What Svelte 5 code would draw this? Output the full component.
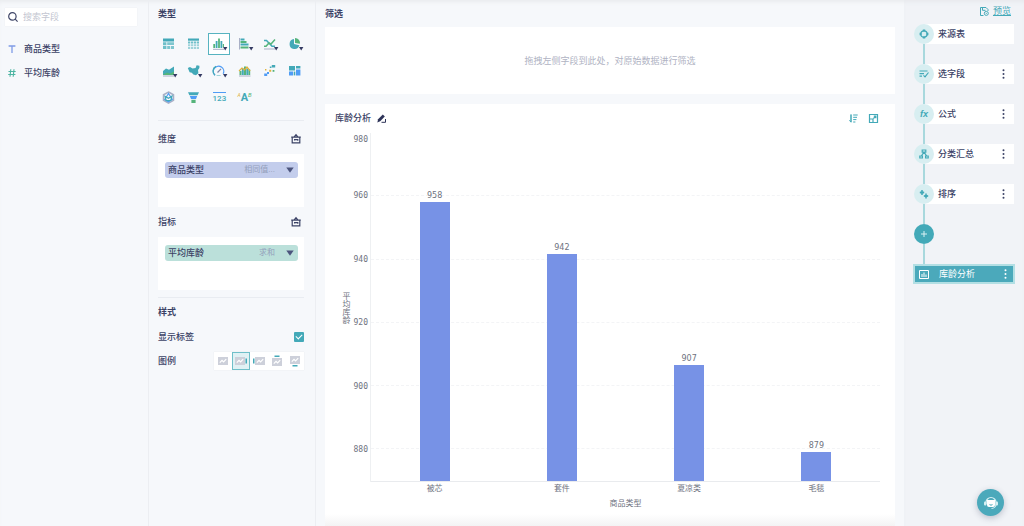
<script lang="ts">
	const teal = '#43a9b8';
	const green = '#55b47b';
	const blue = '#4f9cf5';
	const pale = '#9fd3da';
	const grey = '#a9b0c6';
	const gold = '#e0b23c';

	type Shape = { d: string; fill?: string; stroke?: string; width?: number };
	type ChartType = { name: string; menu?: boolean; shapes: Shape[] };

	const chartTypes: ChartType[] = [
		{
			name: '分组表',
			shapes: [
				{ d: 'M1 1.5h11v3H1z', fill: teal },
				{ d: 'M1 5.2h3.4v3H1zM1 9h3.4v3H1z', fill: '#6fbfc9' },
				{ d: 'M5.2 5.2H12v2.8H5.2zM5.2 9h3v3h-3zM9 9h3v3H9z', fill: '#7fc6cf' }
			]
		},
		{
			name: '明细表',
			shapes: [
				{ d: 'M1 1.5h11v2.2H1z', fill: teal },
				{ d: 'M1 4.4h2.2v2H1zM3.9 4.4h2.2v2H3.9zM6.8 4.4H9v2H6.8zM9.7 4.4H12v2H9.7z', fill: '#6fbfc9' },
				{ d: 'M1 7.2h2.2v2H1zM3.9 7.2h2.2v2H3.9zM6.8 7.2H9v2H6.8zM9.7 7.2H12v2H9.7zM1 10h2.2v2H1zM3.9 10h2.2v2H3.9zM6.8 10H9v2H6.8zM9.7 10H12v2H9.7z', fill: pale }
			]
		},
		{
			name: '柱形图',
			menu: true,
			shapes: [
				{ d: 'M1.3 7h1.8v4H1.3zM6.1 1.5h1.8V11H6.1z', fill: green },
				{ d: 'M3.7 4h1.8v7H3.7zM8.5 4h1.8v7H8.5z', fill: teal },
				{ d: 'M1 12.3h11', stroke: grey, width: 1 },
				{ d: 'M10.8 7H12v3h-1.2z', fill: green }
			]
		},
		{
			name: '条形图',
			menu: true,
			shapes: [
				{ d: 'M1.5 1v11.5', stroke: grey, width: 1 },
				{ d: 'M2.5 1.5h4v2h-4zM2.5 6.6h8v2h-8z', fill: teal },
				{ d: 'M2.5 4h6v2h-6zM2.5 9.4h8v2.2h-8z', fill: green }
			]
		},
		{
			name: '折线图',
			menu: true,
			shapes: [
				{ d: 'M1 3.5h2.5L9 9.3h3', stroke: teal, width: 1.5 },
				{ d: 'M1 9.3h2L6 6l2 1 4-4.5', stroke: green, width: 1.5 },
				{ d: 'M1 12h11', stroke: grey, width: 1 }
			]
		},
		{
			name: '饼图',
			menu: true,
			shapes: [
				{ d: 'M6 2a5 5 0 1 0 5.4 6.3L6 7z', fill: teal },
				{ d: 'M7 1a5 5 0 0 1 5 5.8L7 6z', fill: green }
			]
		},
		{
			name: '面积图',
			menu: true,
			shapes: [
				{ d: 'M1 7l3-2.5 3 1.2L12 2.5V11H1z', fill: teal },
				{ d: 'M1 10.5l4-2 3 1 4-2V11H1z', fill: green },
				{ d: 'M1 12h11', stroke: grey, width: 1 }
			]
		},
		{
			name: '地图',
			menu: true,
			shapes: [
				{ d: 'M0.8 4L3 3l2.5 1.6L8.6 4l1-2.8 2.8.6v2.3L11 6l.4 3.3-2.4 1.9-2.6-.8-1.6-1.6-2.2-.6z', fill: teal }
			]
		},
		{
			name: '仪表盘',
			menu: true,
			shapes: [
				{ d: 'M3 11.2A5.2 5.2 0 1 1 11.2 9.8', stroke: blue, width: 1.3 },
				{ d: 'M3 11.2A5.2 5.2 0 0 1 4 2.4', stroke: teal, width: 1.3 },
				{ d: 'M5.5 8.5L9 4.8', stroke: '#7d86a8', width: 1.2 },
				{ d: 'M4.6 11.5h4', stroke: pale, width: 1 }
			]
		},
		{
			name: '组合图',
			shapes: [
				{ d: 'M1.5 7h2v4h-2zM6 2.5h2V11H6zM10.4 5.5h1.8V11h-1.8z', fill: green },
				{ d: 'M3.8 4.5h2V11h-2zM8.3 4.5h2V11h-2z', fill: teal },
				{ d: 'M1 7l3-3 2.5 2L9 3l3.2 3.8', stroke: gold, width: 1.2 },
				{ d: 'M1 12h11.5', stroke: grey, width: 1 }
			]
		},
		{
			name: '散点图',
			shapes: [
				{ d: 'M6.8 2.4h1.6V4H6.8zM8.8 1h3.4v2.6H8.8z', fill: teal },
				{ d: 'M1.2 9.4h3V12h-3zM4 8h2v2H4z', fill: blue },
				{ d: 'M6.2 5.8h2v2h-2zM2 5h1.4v1.4H2z', fill: gold },
				{ d: 'M9.6 6h1.8v1.8H9.6z', fill: green }
			]
		},
		{
			name: '矩形树图',
			shapes: [
				{ d: 'M1 2h6v4.6H1zM8 2h4.4v2.6H8z', fill: teal },
				{ d: 'M1 7.6h4v3.8H1zM8 5.4h4.4v6H8z', fill: blue },
				{ d: 'M5.7 7.6h1.6v3.8H5.7z', fill: teal }
			]
		},
		{
			name: '雷达图',
			shapes: [
				{ d: 'M6.5 1l5 2.8v5.6l-5 2.8-5-2.8V3.8z', stroke: grey, width: 1.5 },
				{ d: 'M6.5 2.5l3.8 5.8-3.8 2.6-3.8-2.4z', stroke: blue, width: 1.2 },
				{ d: 'M3 5.4l3.5 1.8L10 5 8.8 9.5l-4.6.2z', stroke: teal, width: 1.2 }
			]
		},
		{
			name: '漏斗图',
			shapes: [
				{ d: 'M1 1.2h11l-1.4 3.1H2.4z', fill: teal },
				{ d: 'M2.8 5h7.4L9 8H4z', fill: blue },
				{ d: 'M4.4 8.8h4.2V12H4.4z', fill: green }
			]
		}
	];

	const steps = [
		{ label: '来源表', icon: 'source', menu: false },
		{ label: '选字段', icon: 'fields', menu: true },
		{ label: '公式', icon: 'fx', menu: true },
		{ label: '分类汇总', icon: 'group', menu: true },
		{ label: '排序', icon: 'sort', menu: true }
	];

	// where the small chart sits inside each legend button
	const legends = [
		{ pos: 'none', x: 1, y: 2, mark: '' },
		{ pos: 'right', x: 0, y: 2, mark: 'M10.5 3.5H12v5h-1.5z' },
		{ pos: 'left', x: 2, y: 2, mark: 'M0 3.5h1.5v5H0z' },
		{ pos: 'top', x: 1, y: 3, mark: 'M3.5.5h5V2h-5z' },
		{ pos: 'bottom', x: 1, y: 1, mark: 'M3.5 10h5v1.5h-5z' }
	];

	const axisMin = 870;
	const axisMax = 980;
	const ticks = [980, 960, 940, 920, 900, 880];
	const bars = [
		{ name: '被芯', value: 958.1 },
		{ name: '套件', value: 941.6 },
		{ name: '夏凉类', value: 906.7 },
		{ name: '毛毯', value: 879.3 }
	];

	let selected = $state('柱形图');
	let legend = $state('right');
	let showLabels = $state(true);

	function percent(value: number) {
		return ((value - axisMin) / (axisMax - axisMin)) * 100;
	}
</script>

{#snippet dots()}
	<svg width="3" height="10" viewBox="0 0 3 10" fill="currentColor">
		<circle cx="1.5" cy="1.2" r="1" /><circle cx="1.5" cy="5" r="1" /><circle cx="1.5" cy="8.8" r="1" />
	</svg>
{/snippet}

{#snippet dropZone(title: string, field: string, mode: string, kind: string)}
	<div class="row zone-head">
		<span>{title}</span>
		<button class="plain" aria-label="清空{title}">
			<svg width="10" height="10" viewBox="0 0 10 10" fill="none" stroke="#3b4266" stroke-width="1.2">
				<path d="M.2 3.2h9.6M1.2 3.2v5.6h7.6V3.2M3 3.2L5 .8l2 2.4M3.6 6.4V5.6h3.2v1.2" />
			</svg>
		</button>
	</div>
	<div class="drop">
		<button class="pill {kind}">
			<span>{field}</span>
			<span class="mode">{mode}</span>
			<svg width="8" height="6" viewBox="0 0 8 6"><path d="M.3.5h7.4L4 5.7z" fill="#4c557d" /></svg>
		</button>
	</div>
{/snippet}

<div class="app">
	<aside class="fields">
		<label class="search">
			<svg width="10" height="10" viewBox="0 0 10 10" fill="none" stroke="#3f4668" stroke-width="1.2">
				<circle cx="4.4" cy="4.4" r="3.7" /><path d="M7.2 7.2l2.4 2.4" />
			</svg>
			<input type="text" placeholder="搜索字段" aria-label="搜索字段" />
		</label>
		<ul>
			<li>
				<svg width="8" height="8" viewBox="0 0 8 8" fill="none" stroke="#7f9be6" stroke-width="1.3">
					<path d="M.6 1h6.8M4 1v7" />
				</svg>
				商品类型
			</li>
			<li>
				<svg width="8" height="8" viewBox="0 0 8 8" fill="none" stroke="#4db5a2" stroke-width="1.1">
					<path d="M2.8.3L2 7.7M6 .3l-.8 7.400M.5 2.5h7.2M.2 5.5h7.2" />
				</svg>
				平均库龄
			</li>
		</ul>
	</aside>

	<section class="config">
		<h2>类型</h2>
		<div class="types">
			{#each chartTypes as type}
				<button class="type" class:active={selected === type.name} aria-label={type.name} onclick={() => (selected = type.name)}>
					<svg width="14" height="14" viewBox="0 0 14 14">
						{#each type.shapes as s}
							<path d={s.d} fill={s.fill ?? 'none'} stroke={s.stroke ?? 'none'} stroke-width={s.width ?? 0} />
						{/each}
						{#if type.menu}
							<path d="M11 10h4.4l-2.2 3.4z" fill="#343a62" />
						{/if}
					</svg>
				</button>
			{/each}
			<button class="type kpi" aria-label="指标卡"><span>123</span></button>
			<button class="type cloud" aria-label="词云"><i>A</i><b>A</b><em>B</em></button>
		</div>

		<hr />
		{@render dropZone('维度', '商品类型', '相同值...', 'dimension')}
		{@render dropZone('指标', '平均库龄', '求和', 'metric')}
		<hr class="tight" />

		<h2 class="style-title">样式</h2>
		<label class="row option">
			<span>显示标签</span>
			<input type="checkbox" bind:checked={showLabels} />
		</label>
		<div class="row option">
			<span>图例</span>
			<div class="legends">
				{#each legends as item}
					<button class:active={legend === item.pos} aria-label="图例 {item.pos}" onclick={() => (legend = item.pos)}>
						<svg width="12" height="12" viewBox="0 0 12 12">
							<g transform="translate({item.x} {item.y})">
								<path d="M0 0h10v8H0z" fill="#cdd0da" />
								<path d="M1.8 5.600l2.200-2.200L5.600 5l2.600-2.800" fill="none" stroke="#fff" stroke-width="1.200" />
							</g>
							<path d={item.mark} fill={teal} />
						</svg>
					</button>
				{/each}
			</div>
		</div>
	</section>

	<main>
		<h2>筛选</h2>
		<div class="filter">拖拽左侧字段到此处，对原始数据进行筛选</div>

		<div class="card">
			<header>
				<h3>库龄分析</h3>
				<button class="plain" aria-label="重命名">
					<svg width="9" height="9" viewBox="0 0 9 9">
						<path d="M.3 8.5l.8-3.3L5.8.6l2 2-4.600 4.600z" fill="#2d3358" />
						<path d="M4.500 8.300h4V5" fill="none" stroke="#2d3358" />
					</svg>
				</button>
				<div class="tools">
					<button class="plain" aria-label="排序">
						<svg width="9" height="9" viewBox="0 0 9 9" fill="none" stroke={teal}>
							<path d="M2 .5V8M.4 6.3L2 8.200V.5M4.200 1h4.500M4.200 3.300h3.800M4.200 5.600h3.200M4.200 8h2.200" />
						</svg>
					</button>
					<button class="plain" aria-label="放大">
						<svg width="9" height="9" viewBox="0 0 9 9" fill="none" stroke={teal}>
							<path d="M.5.5h8v8h-8zM4.800 2.200h2v2M6.800 2.200L4.500 4.500M.5 5h3.500v3.500" stroke-width="1.200" />
						</svg>
					</button>
				</div>
			</header>

			<div class="chart">
				<span class="y-title">平均库龄</span>
				<div class="y-axis">
					{#each ticks as tick}
						<span class:top={tick === axisMax} style:bottom="{percent(tick)}%">{tick}</span>
					{/each}
				</div>
				<div class="plot">
					{#each ticks.slice(1) as tick}
						<div class="line" style:bottom="{percent(tick)}%"></div>
					{/each}
					{#each bars as bar}
						<div class="slot">
							{#if showLabels}<span>{Math.round(bar.value)}</span>{/if}
							<div class="bar" style:height="{percent(bar.value)}%"></div>
						</div>
					{/each}
				</div>
				<div class="names">
					{#each bars as bar}
						<span>{bar.name}</span>
					{/each}
				</div>
				<span class="x-title">商品类型</span>
			</div>
		</div>
	</main>

	<nav>
		<a class="preview" href="#preview">
			<svg width="9" height="9" viewBox="0 0 9 9" fill="none" stroke={teal}>
				<path d="M3.5 8.500h-3v-8H6l2 2V4M2.500.8v2.500h3" /><circle cx="6.300" cy="6.400" r="2" /><path d="M5.800 6.400h1" />
			</svg>
			<span>预览</span>
		</a>
		{#each steps as step}
			<div class="step">
				<span class="badge">
					{#if step.icon === 'fx'}
						<i>fx</i>
					{:else}
						<svg width="10" height="10" viewBox="0 0 10 10" fill="none" stroke={teal} stroke-width="1.2">
							{#if step.icon === 'source'}
								<circle cx="5" cy="5" r="3.2" />
								<path d="M5 .6v2M5 7.400v2M.6 5h2M7.400 5h2" stroke-width="2.400" />
							{:else if step.icon === 'fields'}
								<path d="M.5 2h8M.5 4.600h4.500M.5 7.200H3M4.500 6.400L6 7.900l3.500-4.400" />
							{:else if step.icon === 'group'}
								<path d="M3.200 1h3.600v2.200H3.200zM5 3.200L2.300 7M5 3.200L7.700 7M.8 7h2.600v2H.8zM6.600 7h2.600v2H6.600z" />
							{:else}
								<path d="M3 1v5M.8 3.500h4.400M7 4.500v5M4.800 7h4.400" stroke-width="1.500" />
								<path d="M1.500 2.500h3v2h-3zM5.500 6h3v2h-3z" fill={teal} stroke="none" />
							{/if}
						</svg>
					{/if}
				</span>
				<a class="name" href="#{step.icon}">{step.label}</a>
				{#if step.menu}
					<button class="plain more" aria-label="{step.label}菜单">{@render dots()}</button>
				{/if}
			</div>
			<div class="link"></div>
		{/each}
		<button class="add" aria-label="添加步骤">
			<svg width="8" height="8" viewBox="0 0 8 8" stroke="#d9f1f3"><path d="M4 1v6M1 4h6" /></svg>
		</button>
		<div class="link"></div>
		<div class="current">
			<svg width="10" height="9" viewBox="0 0 10 9" fill="none" stroke="#fff">
				<path d="M.5.5h9v8h-9zM3 4v3M5 2.500V7M7 4.500V7" />
			</svg>
			<span>库龄分析</span>
			<button class="plain more" aria-label="库龄分析菜单">{@render dots()}</button>
		</div>
	</nav>

	<button class="help" aria-label="客服">
		<svg width="14" height="14" viewBox="0 0 14 14">
			<path d="M2 8V6.500a5 5 0 0 1 10 0V8c0 2.500-2 4.500-4.500 4.500" fill="none" stroke="#d6f0f3" stroke-width="1.200" />
			<rect x="0" y="5.500" width="2.500" height="4" rx="1" fill="#d6f0f3" />
			<rect x="11.500" y="5.500" width="2.500" height="4" rx="1" fill="#d6f0f3" />
			<path d="M3 4h8v5a2 2 0 0 1-2 2H5a2 2 0 0 1-2-2z" fill="#fff" />
			<path d="M5.500 8.600q1.500 1.200 3 0" fill="none" stroke="#43a9b8" />
		</svg>
	</button>
</div>

<style>
	:global(body) {
		margin: 0;
	}
	.app {
		display: grid;
		grid-template-columns: 149px 167px 1fr 120px;
		min-height: 100vh;
		background: #f6f8fb;
		color: #3b4266;
		font-family: 'Liberation Sans', 'Noto Sans CJK SC', sans-serif;
		font-size: 9px;
		line-height: 16px;
		box-shadow: inset 0 4px 4px -2px #e9ebee;
	}
	h2,
	h3 {
		margin: 0;
		font-size: 9px;
		line-height: 16px;
		font-weight: 700;
	}
	h3 {
		font-weight: 500;
	}
	svg {
		display: block;
		flex: none;
		overflow: visible;
	}
	button,
	input {
		font: inherit;
		color: inherit;
	}
	button {
		display: flex;
		align-items: center;
		justify-content: center;
		padding: 0;
		border: none;
		background: none;
		cursor: pointer;
	}
	a {
		color: inherit;
		text-decoration: none;
	}

	/* field list */
	.fields {
		padding: 8px 11px 0 5px;
		border-right: 1px solid #eceef2;
	}
	.search {
		display: flex;
		align-items: center;
		gap: 5px;
		height: 18px;
		padding: 0 3px;
		background: #fff;
		box-shadow: 0 0 1px #e3e6ec;
	}
	.search input {
		flex: 1;
		min-width: 0;
		padding: 0;
		border: none;
		outline: none;
		background: none;
	}
	.search input::placeholder {
		color: #c3c6d1;
	}
	ul {
		margin: 11px 0 0;
		padding: 0;
		list-style: none;
	}
	li {
		display: flex;
		align-items: center;
		gap: 8px;
		height: 24px;
		padding-left: 3px;
		font-weight: 500;
	}

	/* chart settings */
	.config {
		padding: 6px 11px 0 9px;
		border-right: 1px solid #eceef2;
	}
	.types {
		display: grid;
		grid-template-columns: repeat(6, 22px);
		justify-content: space-between;
		row-gap: 5px;
		margin: 11px -2px 11px 0;
	}
	.type {
		box-sizing: border-box;
		height: 22px;
		border: 1px solid transparent;
	}
	.type.active {
		border-color: #57b3c0;
		background: #fff;
	}
	.kpi span {
		border-top: 1px solid #4f9cf5;
		color: #43a9b8;
		font-weight: 500;
		font-size: 8px;
		line-height: 11px;
		font-family: Roboto, sans-serif;
	}
	.cloud {
		font-family: Roboto, sans-serif;
	}
	.cloud i {
		align-self: flex-start;
		color: #e0b23c;
		font-size: 5px;
		line-height: 14px;
	}
	.cloud b {
		color: #43a9b8;
		font-size: 11px;
	}
	.cloud em {
		align-self: flex-start;
		color: #55b47b;
		font-size: 6px;
		line-height: 14px;
	}
	hr {
		height: 1px;
		margin: 0 0 10px;
		border: none;
		background: #e9ecf1;
	}
	hr.tight {
		margin: 5px 0 6px;
	}
	.row {
		display: flex;
		align-items: center;
		justify-content: space-between;
		font-weight: 500;
	}
	.zone-head {
		height: 16px;
		padding-right: 3px;
	}
	.drop {
		box-sizing: border-box;
		height: 53px;
		margin: 7px 0;
		padding: 8px 6px 7px 7px;
		background: #fff;
	}
	.pill {
		width: 100%;
		height: 16px;
		padding: 0 4px 0 3px;
		border-radius: 3px;
		font-weight: 500;
	}
	.pill.dimension {
		background: #c3cdec;
	}
	.pill.metric {
		background: #bbe0da;
	}
	.mode {
		margin: 0 11px 0 auto;
		color: #93a0bb;
		font-size: 8px;
		font-weight: 400;
	}
	.style-title {
		margin-bottom: 5px;
	}
	.option {
		height: 24px;
	}
	.option input {
		position: relative;
		appearance: none;
		width: 10px;
		height: 10px;
		margin: 0;
		border-radius: 1px;
		background: #fff;
	}
	.option input:checked {
		background: #43a9b8;
	}
	.option input:checked::after {
		content: '';
		position: absolute;
		left: 2px;
		top: 2px;
		width: 5px;
		height: 3px;
		border: solid #fff;
		border-width: 0 0 1px 1px;
		transform: rotate(-45deg);
	}
	.legends {
		display: flex;
		background: #fff;
		box-shadow: 0 0 1px #dfe2e8;
	}
	.legends button {
		box-sizing: border-box;
		width: 18px;
		height: 18px;
		border: 1px solid transparent;
	}
	.legends button.active {
		border-color: #6fbfc9;
		background: #e0f1f4;
	}

	/* filter and chart */
	main {
		display: flex;
		flex-direction: column;
		min-width: 0;
		padding: 6px 9px 0;
	}
	.filter {
		display: flex;
		align-items: center;
		justify-content: center;
		height: 67px;
		margin: 5px 0 10px;
		background: #fff;
		color: #b0b3c3;
	}
	.card {
		display: flex;
		flex: 1;
		flex-direction: column;
		padding: 6px 15px 14px 10px;
		background: linear-gradient(to top, #f3f3f4, #fff 12px);
	}
	header {
		display: flex;
		align-items: center;
		gap: 6px;
		height: 16px;
	}
	.tools {
		display: flex;
		gap: 11px;
		margin-left: auto;
		margin-right: 2px;
	}
	.chart {
		display: grid;
		flex: 1;
		grid-template-columns: 15px 21px 1fr;
		grid-template-rows: 1fr 14px 16px;
		margin-top: 7px;
		color: #6e7280;
		font-size: 8px;
	}
	.y-title {
		align-self: center;
		justify-self: end;
		writing-mode: vertical-rl;
		line-height: 9px;
	}
	.y-axis {
		position: relative;
		font-family: 'DejaVu Sans Mono', monospace;
	}
	.y-axis span {
		position: absolute;
		right: 3px;
		line-height: 10px;
		transform: translateY(50%);
	}
	.y-axis span.top {
		transform: translateY(120%);
	}
	.plot {
		position: relative;
		display: flex;
		border-bottom: 1px solid #e9ebee;
		box-shadow: -1px 0 #eef0f2;
	}
	.line {
		position: absolute;
		left: 0;
		right: 0;
		border-top: 1px dashed #f3f4f6;
	}
	.slot {
		position: relative;
		display: flex;
		flex: 1;
		flex-direction: column;
		align-items: center;
		justify-content: flex-end;
		min-height: 300px;
	}
	.slot span {
		font-family: 'DejaVu Sans', sans-serif;
		line-height: 12px;
	}
	.bar {
		width: 30px;
		background: #7792e6;
	}
	.names {
		display: flex;
		grid-column: 3;
		line-height: 14px;
	}
	.names span {
		flex: 1;
		text-align: center;
	}
	.x-title {
		grid-column: 3;
		text-align: center;
	}

	/* steps */
	nav {
		padding: 4px 10px 0;
		background: #f1f3f7;
		box-shadow: inset 0 4px 4px -2px #e7e9ed;
	}
	.preview {
		display: flex;
		align-items: center;
		justify-content: flex-end;
		gap: 4px;
		height: 14px;
		margin: 0 3px 6px 0;
		color: #43a9b8;
		line-height: 14px;
	}
	.preview span {
		text-decoration: underline;
	}
	.step {
		display: flex;
		align-items: center;
		height: 20px;
		background: linear-gradient(to right, transparent 10px, #fff 10px);
		font-weight: 500;
	}
	.badge {
		display: flex;
		flex: none;
		align-items: center;
		justify-content: center;
		width: 20px;
		height: 20px;
		margin-right: 4px;
		border-radius: 50%;
		background: #d8eef1;
		color: #43a9b8;
	}
	.badge i {
		font-weight: 700;
	}
	.more {
		margin-left: auto;
		padding-right: 9px;
	}
	.link {
		width: 2px;
		height: 20px;
		margin-left: 9px;
		background: #a8d8dd;
	}
	.add {
		width: 20px;
		height: 20px;
		border-radius: 50%;
		background: #43a9b8;
	}
	.current {
		display: flex;
		align-items: center;
		gap: 10px;
		height: 16px;
		margin: 2px 1px 0;
		padding-left: 4px;
		outline: 2px solid #b3dfe4;
		background: #4ba9bb;
		color: #fff;
	}
	.current .more {
		padding-right: 6px;
	}
	.help {
		position: fixed;
		right: 20px;
		bottom: 10px;
		width: 27px;
		height: 27px;
		border-radius: 50%;
		background: #4ba9bb;
		box-shadow: 0 2px 6px rgba(60, 70, 100, 0.3);
	}
</style>
